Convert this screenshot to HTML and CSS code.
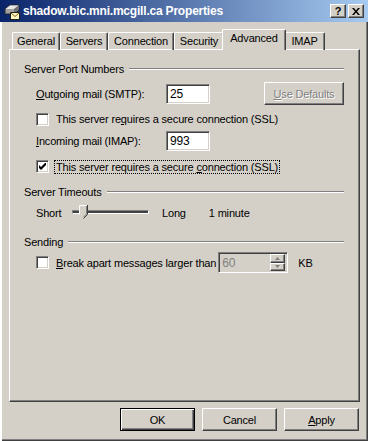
FILE: index.html
```html
<!DOCTYPE html>
<html lang="en">
  <head>
    <meta charset="UTF-8" />
    <title>shadow.bic.mni.mcgill.ca Properties</title>
    <link rel="stylesheet" href="styles.css">
  </head>
  <body>
    <div class="window">
      <div class="titlebar">
        <svg class="app-icon" width="16" height="16" viewBox="0 0 16 16">
          <path d="M1 5 L6 1 L15 1 L15 6 L10 10 L1 10 Z" fill="#a0a0a0" stroke="#202020" stroke-width="0.8"/>
          <path d="M1.5 5 L6 1.5 L14.5 1.5 L10 5 Z" fill="#e8e8e8"/>
          <path d="M10 5 L14.5 1.5 L14.5 6 L10 9.5 Z" fill="#707070"/>
          <rect x="6.5" y="8.5" width="9" height="7" fill="#fff8c0" stroke="#202020" stroke-width="1"/>
          <path d="M6.5 8.5 L11 12.5 L15.5 8.5" fill="none" stroke="#806020" stroke-width="1"/>
        </svg>
        <span class="title">shadow.bic.mni.mcgill.ca Properties</span>
        <div class="caption-buttons">
          <div class="cap-btn help">?</div>
          <div class="cap-btn close">
            <svg width="8" height="7" viewBox="0 0 8 7">
              <path d="M0 0 L2 0 L4 2.5 L6 0 L8 0 L5 3.5 L8 7 L6 7 L4 4.5 L2 7 L0 7 L3 3.5 Z" fill="#000"/>
            </svg>
          </div>
        </div>
      </div>

      <div class="body">
        <div class="tabs">
          <div class="tab tab-general">General</div>
          <div class="tab tab-servers">Servers</div>
          <div class="tab tab-connection">Connection</div>
          <div class="tab tab-security">Security</div>
          <div class="tab tab-advanced active">Advanced</div>
          <div class="tab tab-imap">IMAP</div>
        </div>

        <div class="panel">
          <div class="group-title">Server Port Numbers</div>

          <div class="row row-smtp">
            <span class="field-label"><u>O</u>utgoing mail (SMTP):</span>
            <div class="textbox">25</div>
            <div class="button disabled use-defaults"><u>U</u>se Defaults</div>
          </div>

          <div class="row row-check1">
            <span class="checkbox"></span>
            <span class="check-label">This server re<u>q</u>uires a secure connection (SSL)</span>
          </div>

          <div class="row row-imap">
            <span class="field-label"><u>I</u>ncoming mail (IMAP):</span>
            <div class="textbox">993</div>
          </div>

          <div class="row row-check2">
            <span class="checkbox checked">
              <svg width="7" height="7" viewBox="0 0 7 7">
                <path d="M0 2 L0 5 L2 7 L7 2 L7 -1 L2 4 Z" fill="#000"/>
              </svg>
            </span>
            <span class="check-label focused">This server requires a secure <u>c</u>onnection (SSL)</span>
          </div>

          <div class="group-title group-timeouts">Server Timeouts</div>

          <div class="row row-slider">
            <span class="slider-label">Short</span>
            <div class="slider">
              <div class="slider-track"></div>
              <svg class="slider-thumb" width="9" height="14" viewBox="0 0 9 14">
                <path d="M0.5 0.5 L8.5 0.5 L8.5 9.5 L4.5 13.5 L0.5 9.5 Z" fill="#d4d0c8"/>
                <path d="M0.5 9.5 L0.5 0.5 L8 0.5" fill="none" stroke="#fff"/>
                <path d="M8.5 0 L8.5 9.5 L4.5 13.5" fill="none" stroke="#404040"/>
                <path d="M7.5 1 L7.5 9 L4.5 12" fill="none" stroke="#808080"/>
              </svg>
            </div>
            <span class="slider-long">Long</span>
            <span class="slider-value">1 minute</span>
          </div>

          <div class="group-title group-sending">Sending</div>

          <div class="row row-check3">
            <span class="checkbox"></span>
            <span class="check-label"><u>B</u>reak apart messages larger than</span>
            <div class="spinbox">
              <span class="spin-value">60</span>
              <div class="spin-buttons">
                <div class="spin-btn">
                  <svg width="5" height="3" viewBox="0 0 5 3"><path d="M2.5 0 L5 3 L0 3 Z" fill="#808080"/></svg>
                </div>
                <div class="spin-btn">
                  <svg width="5" height="3" viewBox="0 0 5 3"><path d="M0 0 L5 0 L2.5 3 Z" fill="#808080"/></svg>
                </div>
              </div>
            </div>
            <span class="unit">KB</span>
          </div>
        </div>

        <div class="actions">
          <div class="button default">OK</div>
          <div class="button">Cancel</div>
          <div class="button"><u>A</u>pply</div>
        </div>
      </div>
    </div>
  </body>
</html>
```

FILE: styles.css
```css
body {
  margin: 0;
  background: #d4d0c8;
  font-family: "Liberation Sans", Arial, sans-serif;
  font-size: 11px;
  letter-spacing: -0.17px;
  color: #000;
}

u {
  text-decoration: underline;
  text-underline-offset: 1px;
}

.window {
  width: 368px;
  height: 441px;
  box-sizing: border-box;
  background: #d4d0c8;
  box-shadow: inset 2px 0 #ffffff, inset -1px -1px #404040, inset -2px -2px #808080;
}

/* title bar */
.titlebar {
  height: 22px;
  display: flex;
  align-items: center;
  padding: 0 4px 0 4px;
  background: linear-gradient(90deg, #0a246a, #a6caf0);
  color: #fff;
}

.app-icon {
  flex: none;
  margin-top: 1px;
}

.title {
  margin-left: 3px;
  font-weight: bold;
  font-size: 12px;
  letter-spacing: -0.2px;
  white-space: nowrap;
}

.caption-buttons {
  margin-left: auto;
  display: flex;
  gap: 2px;
}

.cap-btn {
  width: 16px;
  height: 14px;
  box-sizing: border-box;
  background: #d4d0c8;
  border: 1px solid;
  border-color: #fff #404040 #404040 #fff;
  box-shadow: inset -1px -1px #808080;
  display: flex;
  align-items: center;
  justify-content: center;
  color: #000;
  font-weight: bold;
  font-size: 11px;
  line-height: 1;
}

/* body */
.body {
  padding: 7px 0 0 9px;
}

.tabs {
  display: flex;
  align-items: flex-end;
  height: 21px;
  padding-left: 3px;
  margin-bottom: -1px;
}

.tab {
  position: relative;
  height: 18px;
  box-sizing: border-box;
  padding: 2px 0 0;
  text-align: center;
  border-left: 1px solid #fff;
  border-top: 1px solid #fff;
  border-right: 1px solid #404040;
  border-radius: 2px 2px 0 0;
  box-shadow: inset -1px 0 #808080;
  white-space: nowrap;
}

.tab-general { width: 48px; }
.tab-servers { width: 48px; }
.tab-connection { width: 66px; }
.tab-security { width: 50px; }
.tab-advanced { width: 64px; }
.tab-imap { width: 41px; }

.tab.active {
  height: 21px;
  margin: 0 -2px;
  padding-top: 2px;
  z-index: 1;
  background: #d4d0c8;
}

.panel {
  width: 351px;
  height: 353px;
  box-sizing: border-box;
  padding: 12px 15px 0 14px;
  border-left: 1px solid #fff;
  border-top: 1px solid #fff;
  border-right: 1px solid #404040;
  border-bottom: 1px solid #404040;
  box-shadow: inset -1px -1px #808080;
}

.group-title {
  display: flex;
  align-items: center;
  height: 14px;
  white-space: nowrap;
}

.group-title::after {
  content: "";
  flex: 1;
  margin-left: 5px;
  height: 0;
  border-top: 1px solid #808080;
  border-bottom: 1px solid #fff;
}

.group-timeouts { margin-top: 10px; }
.group-sending { margin-top: 13px; }

.row {
  display: flex;
  align-items: center;
  margin-left: 12px;
  white-space: nowrap;
}

.row-smtp { height: 23px; margin-top: 6px; }
.row-check1 { height: 18px; margin-top: 5px; }
.row-imap { height: 20px; margin-top: 3px; }
.row-check2 { height: 17px; margin-top: 7px; }
.row-slider { height: 18px; margin-top: 5px; }
.row-check3 { height: 23px; margin-top: 2px; }

.field-label {
  width: 130px;
}

.textbox {
  width: 44px;
  height: 20px;
  box-sizing: border-box;
  padding: 2px 3px 0;
  background: #fff;
  border: 1px solid;
  border-color: #808080 #fff #fff #808080;
  box-shadow: inset 1px 1px #404040, inset -1px -1px #d4d0c8;
  font-size: 12px;
}

.button {
  width: 75px;
  height: 23px;
  box-sizing: border-box;
  display: flex;
  align-items: center;
  justify-content: center;
  background: #d4d0c8;
  border: 1px solid;
  border-color: #fff #404040 #404040 #fff;
  box-shadow: inset -1px -1px #808080;
}

.button.disabled {
  color: #808080;
  text-shadow: 1px 1px #fff;
}

.use-defaults {
  width: 80px;
  margin-left: auto;
}

.checkbox {
  width: 13px;
  height: 13px;
  box-sizing: border-box;
  flex: none;
  background: #fff;
  border: 1px solid;
  border-color: #808080 #fff #fff #808080;
  box-shadow: inset 1px 1px #404040, inset -1px -1px #d4d0c8;
  display: flex;
  align-items: center;
  justify-content: center;
}

.check-label {
  margin-left: 6px;
  padding: 0 1px;
}

.check-label.focused {
  outline: 1px dotted #000;
  outline-offset: 0;
}

/* slider */
.slider-label {
  width: 36px;
}

.slider {
  position: relative;
  width: 77px;
  height: 18px;
  display: flex;
  align-items: center;
}

.slider-track {
  width: 77px;
  height: 4px;
  box-sizing: border-box;
  border: 1px solid;
  border-color: #808080 #fff #fff #808080;
  background: #404040;
  margin-top: -3px;
}

.slider-thumb {
  position: absolute;
  left: 7px;
  top: 1px;
}

.slider-long {
  margin-left: 13px;
}

.slider-value {
  margin-left: 23px;
}

/* spinbox */
.spinbox {
  margin-left: 1px;
  width: 70px;
  height: 21px;
  box-sizing: border-box;
  display: flex;
  align-items: center;
  justify-content: space-between;
  padding: 2px 2px 2px 3px;
  background: #d4d0c8;
  border: 1px solid;
  border-color: #808080 #fff #fff #808080;
  box-shadow: inset 1px 1px #404040, inset -1px -1px #d4d0c8;
}

.spin-value {
  color: #808080;
  font-size: 12px;
}

.spin-buttons {
  display: flex;
  flex-direction: column;
  width: 15px;
  height: 17px;
}

.spin-btn {
  flex: 1;
  box-sizing: border-box;
  display: flex;
  align-items: center;
  justify-content: center;
  border: 1px solid;
  border-color: #fff #404040 #404040 #fff;
  box-shadow: inset -1px -1px #808080;
}

.unit {
  margin-left: 10px;
}

/* bottom buttons */
.actions {
  display: flex;
  justify-content: flex-end;
  gap: 7px;
  margin-top: 6px;
  width: 350px;
}

.button.default {
  border: 1px solid #000;
  box-shadow: inset 1px 1px #fff, inset -1px -1px #404040, inset -2px -2px #808080;
}
```
